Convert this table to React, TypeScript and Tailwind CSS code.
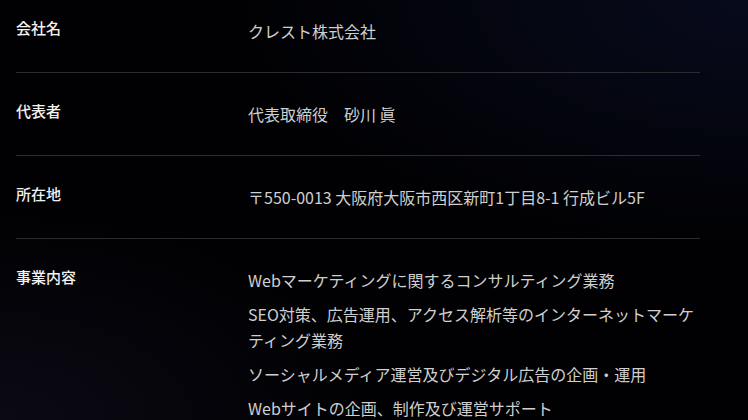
const rows: { label: string; values: string[] }[] = [
  { label: "会社名", values: ["クレスト株式会社"] },
  { label: "代表者", values: ["代表取締役　砂川 眞"] },
  { label: "所在地", values: ["〒550-0013 大阪府大阪市西区新町1丁目8-1 行成ビル5F"] },
  {
    label: "事業内容",
    values: [
      "Webマーケティングに関するコンサルティング業務",
      "SEO対策、広告運用、アクセス解析等のインターネットマーケティング業務",
      "ソーシャルメディア運営及びデジタル広告の企画・運用",
      "Webサイトの企画、制作及び運営サポート",
    ],
  },
];

export default function App() {
  return (
    <div
      className="h-[420px] w-[748px] overflow-hidden [background:radial-gradient(ellipse_70%_60%_at_100%_0%,#070a1c_0%,transparent_100%),radial-gradient(ellipse_50%_50%_at_0%_100%,#0b0914_0%,transparent_100%),#010103]"
      style={{ fontFamily: '"Noto Sans CJK JP", "Noto Sans", sans-serif' }}
    >
      <dl className="mx-4 w-[684px]">
        {rows.map((row, i) => (
          <div
            key={row.label}
            className={
              i === 0
                ? "flex border-b border-[#2c2c30] pb-[28px] pt-[17px]"
                : i === rows.length - 1
                  ? "flex pb-[28px] pt-[27px]"
                  : "flex border-b border-[#2c2c30] pb-[28px] pt-[27px]"
            }
          >
            <dt className="w-[232px] shrink-0 text-[15px] font-medium leading-[22px] text-[#f2f2f2]">
              {row.label}
            </dt>
            <dd className="mt-px flex flex-1 flex-col gap-2 text-[16px] leading-[26px] text-[#cfcfcf]">
              {row.values.map((v) => (
                <p key={v}>{v}</p>
              ))}
            </dd>
          </div>
        ))}
      </dl>
    </div>
  );
}
